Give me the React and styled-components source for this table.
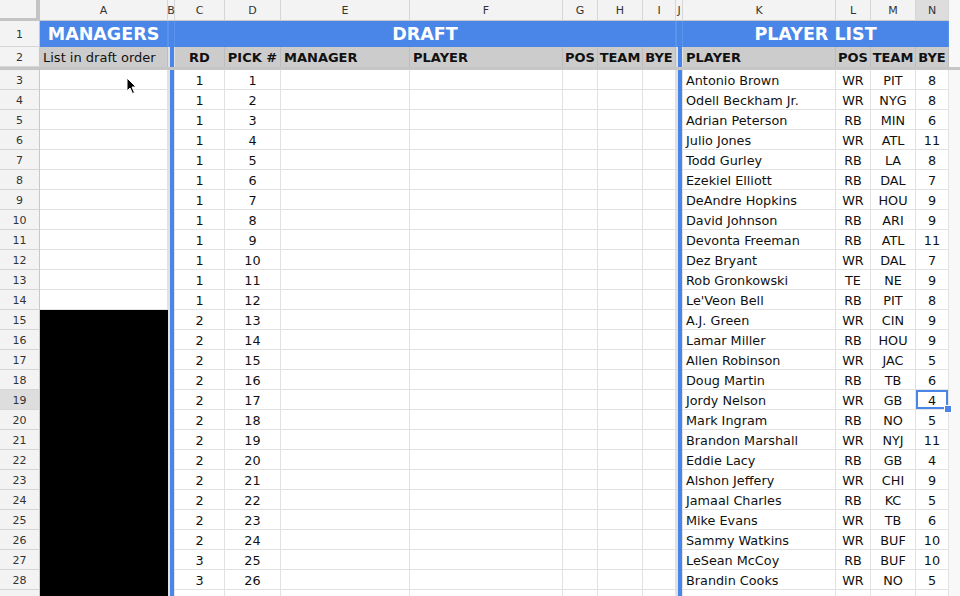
import React from "react";
import styled, { createGlobalStyle, css } from "styled-components";

const COLS =
  "40px 128px 7px 50px 56px 129px 153px 35px 45px 33px 7px 153px 35px 45px 33px 1fr";

const LETTERS = ["A", "B", "C", "D", "E", "F", "G", "H", "I", "J", "K", "L", "M", "N"];

const players = [
  ["Antonio Brown", "WR", "PIT", 8],
  ["Odell Beckham Jr.", "WR", "NYG", 8],
  ["Adrian Peterson", "RB", "MIN", 6],
  ["Julio Jones", "WR", "ATL", 11],
  ["Todd Gurley", "RB", "LA", 8],
  ["Ezekiel Elliott", "RB", "DAL", 7],
  ["DeAndre Hopkins", "WR", "HOU", 9],
  ["David Johnson", "RB", "ARI", 9],
  ["Devonta Freeman", "RB", "ATL", 11],
  ["Dez Bryant", "WR", "DAL", 7],
  ["Rob Gronkowski", "TE", "NE", 9],
  ["Le'Veon Bell", "RB", "PIT", 8],
  ["A.J. Green", "WR", "CIN", 9],
  ["Lamar Miller", "RB", "HOU", 9],
  ["Allen Robinson", "WR", "JAC", 5],
  ["Doug Martin", "RB", "TB", 6],
  ["Jordy Nelson", "WR", "GB", 4],
  ["Mark Ingram", "RB", "NO", 5],
  ["Brandon Marshall", "WR", "NYJ", 11],
  ["Eddie Lacy", "RB", "GB", 4],
  ["Alshon Jeffery", "WR", "CHI", 9],
  ["Jamaal Charles", "RB", "KC", 5],
  ["Mike Evans", "WR", "TB", 6],
  ["Sammy Watkins", "WR", "BUF", 10],
  ["LeSean McCoy", "RB", "BUF", 10],
  ["Brandin Cooks", "WR", "NO", 5],
];

const GlobalStyle = createGlobalStyle`
  body {
    margin: 0;
    overflow: hidden;
    background: #f8f8f8;
    font-family: Verdana, "DejaVu Sans", sans-serif;
  }
`;

function App() {
  return (
    <>
      <GlobalStyle />
      <Sheet>
        <Row $h={21}>
          <Corner />
          {LETTERS.map((l) => (
            <ColHead key={l} $active={l === "N"}>
              {l}
            </ColHead>
          ))}
          <Filler />
        </Row>

        <Row $h={26}>
          <RowHead>1</RowHead>
          <Title>MANAGERS</Title>
          <Divider $title />
          <Title $span={7}>DRAFT</Title>
          <Divider $title />
          <Title $span={4}>PLAYER LIST</Title>
          <Filler />
        </Row>

        <Row $h={23} $frozen>
          <RowHead>2</RowHead>
          <Label>List in draft order</Label>
          <Divider />
          <Label $bold $center>RD</Label>
          <Label $bold $center>PICK #</Label>
          <Label $bold>MANAGER</Label>
          <Label $bold>PLAYER</Label>
          <Label $bold $center>POS</Label>
          <Label $bold $center>TEAM</Label>
          <Label $bold $center>BYE</Label>
          <Divider />
          <Label $bold>PLAYER</Label>
          <Label $bold $center>POS</Label>
          <Label $bold $center>TEAM</Label>
          <Label $bold $center>BYE</Label>
          <Filler />
        </Row>

        {players.map(([name, pos, team, bye], i) => {
          const pick = i + 1;
          const rd = Math.ceil(pick / 12);
          const rowNum = i + 3;
          return (
            <Row key={name} $h={20}>
              <RowHead $active={rowNum === 19}>{rowNum}</RowHead>
              <Cell $black={rowNum >= 15} />
              <Divider />
              <Cell $center>{rd}</Cell>
              <Cell $center>{pick}</Cell>
              <Cell />
              <Cell />
              <Cell />
              <Cell />
              <Cell />
              <Divider />
              <Cell>{name}</Cell>
              <Cell $center>{pos}</Cell>
              <Cell $center>{team}</Cell>
              <Cell $center $selected={rowNum === 19}>
                {bye}
              </Cell>
              <Filler />
            </Row>
          );
        })}

        <Row $h={20}>
          <RowHead />
          <Cell $black />
          <Divider />
          {Array.from({ length: 7 }, (_, k) => (
            <Cell key={k} />
          ))}
          <Divider />
          {Array.from({ length: 4 }, (_, k) => (
            <Cell key={k} />
          ))}
          <Filler />
        </Row>

        <Pointer width="12" height="18" viewBox="0 0 12 18">
          <path
            d="M1 1 L1 14 L4 11 L6.5 16.5 L8.5 15.5 L6 10 L10 10 Z"
            fill="#000"
            stroke="#fff"
            strokeWidth="1"
            strokeLinejoin="round"
          />
        </Pointer>
      </Sheet>
    </>
  );
}

const Sheet = styled.div`
  position: relative;
  width: 960px;
  height: 596px;
  overflow: hidden;
`;

const Row = styled.div`
  display: grid;
  grid-template-columns: ${COLS};
  height: ${(p) => p.$h}px;
  box-sizing: border-box;
  ${(p) =>
    p.$frozen &&
    css`
      border-bottom: 3px solid #c6c6c6;
    `}
`;

const Corner = styled.div`
  background: #f3f3f3;
  border-right: 4px solid #c4c4c4;
  border-bottom: 3px solid #c4c4c4;
`;

const ColHead = styled.div`
  display: flex;
  align-items: center;
  justify-content: center;
  background: ${(p) => (p.$active ? "#dddddd" : "#f3f3f3")};
  border-right: 1px solid #d6d6d6;
  border-bottom: 1px solid #c8c8c8;
  font-size: 11px;
  color: #333;
`;

const RowHead = styled.div`
  display: flex;
  align-items: center;
  justify-content: center;
  padding-top: 1px;
  background: ${(p) => (p.$active ? "#dddddd" : "#f3f3f3")};
  border-right: 1px solid #c8c8c8;
  border-bottom: 1px solid #d6d6d6;
  font-size: 11px;
  color: #333;
`;

const Title = styled.div`
  grid-column: span ${(p) => p.$span || 1};
  display: flex;
  align-items: center;
  justify-content: center;
  background: #4a86e8;
  border-right: 1px solid #5a92ec;
  color: #fff;
  font-size: 17.5px;
  font-weight: bold;
`;

const Divider = styled.div`
  background: #4a86e8;
  border-left: ${(p) => (p.$title ? "1px solid #5a92ec" : "2px solid #e2e2e2")};
  border-right: 1px solid ${(p) => (p.$title ? "#5a92ec" : "#e2e2e2")};
`;

const Label = styled.div`
  display: flex;
  align-items: center;
  justify-content: ${(p) => (p.$center ? "center" : "flex-start")};
  padding: 0 3px;
  background: #cccccc;
  border-right: 1px solid #bdbdbd;
  font-size: 13px;
  font-weight: ${(p) => (p.$bold ? "bold" : "normal")};
  color: #111;
  white-space: nowrap;
  overflow: hidden;
`;

const Cell = styled.div`
  position: relative;
  display: flex;
  align-items: center;
  justify-content: ${(p) => (p.$center ? "center" : "flex-start")};
  padding: 1px 3px 0;
  background: ${(p) => (p.$black ? "#000" : "#fff")};
  border-right: 1px solid ${(p) => (p.$black ? "#000" : "#e2e2e2")};
  border-bottom: 1px solid ${(p) => (p.$black ? "#000" : "#e2e2e2")};
  font-size: 12.8px;
  color: #111;
  white-space: nowrap;
  ${(p) =>
    p.$selected &&
    css`
      box-shadow: inset 0 0 0 2px #4a86e8;
      &::after {
        content: "";
        position: absolute;
        right: -4px;
        bottom: -4px;
        width: 6px;
        height: 6px;
        background: #4a86e8;
        border: 1px solid #fff;
        z-index: 2;
      }
    `}
`;

const Filler = styled.div`
  background: #f8f8f8;
`;

const Pointer = styled.svg`
  position: absolute;
  left: 126px;
  top: 77px;
`;

export default App;
